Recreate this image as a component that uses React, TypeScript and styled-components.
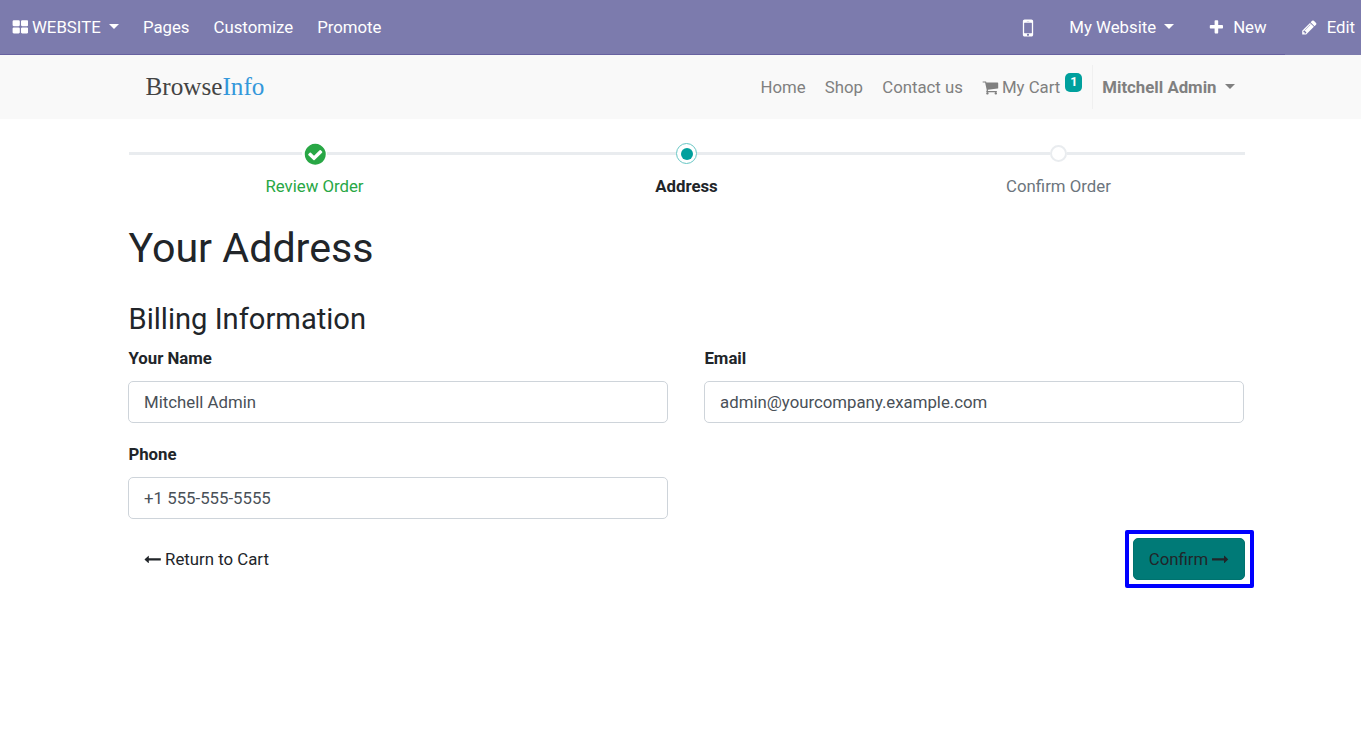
import React from "react";
import styled, { createGlobalStyle } from "styled-components";

const GlobalStyle = createGlobalStyle`
  *, *::before, *::after { box-sizing: border-box; }
  body {
    margin: 0;
    background: #fff;
    color: #212529;
    font-family: Roboto, "Liberation Sans", sans-serif;
    font-size: 16.8px;
    line-height: 25.2px;
  }
  a { color: inherit; text-decoration: none; }
`;

const icons = {
  thLarge:
    "M832 1024v384q0 52-38 90t-90 38h-512q-52 0-90-38t-38-90v-384q0-52 38-90t90-38h512q52 0 90 38t38 90zm0-768v384q0 52-38 90t-90 38h-512q-52 0-90-38t-38-90v-384q0-52 38-90t90-38h512q52 0 90 38t38 90zm896 768v384q0 52-38 90t-90 38h-512q-52 0-90-38t-38-90v-384q0-52 38-90t90-38h512q52 0 90 38t38 90zm0-768v384q0 52-38 90t-90 38h-512q-52 0-90-38t-38-90v-384q0-52 38-90t90-38h512q52 0 90 38t38 90z",
  mobile:
    "M976 1408q0-33-23.5-56.5t-56.5-23.5-56.5 23.5-23.5 56.5 23.5 56.5 56.5 23.5 56.5-23.5 23.5-56.5zm208-160v-704q0-13-9.5-22.5t-22.5-9.5h-512q-13 0-22.5 9.5t-9.5 22.5v704q0 13 9.5 22.5t22.5 9.5h512q13 0 22.5-9.5t9.5-22.5zm-192-848q0-16-16-16h-160q-16 0-16 16t16 16h160q16 0 16-16zm288-16v1024q0 52-38 90t-90 38h-512q-52 0-90-38t-38-90v-1024q0-52 38-90t90-38h512q52 0 90 38t38 90z",
  plus:
    "M1600 736v192q0 40-28 68t-68 28h-416v416q0 40-28 68t-68 28h-192q-40 0-68-28t-28-68v-416h-416q-40 0-68-28t-28-68v-192q0-40 28-68t68-28h416v-416q0-40 28-68t68-28h192q40 0 68 28t28 68v416h416q40 0 68 28t28 68z",
  pencil:
    "M491 1536l91-91-235-235-91 91v107h128v128h107zm523-928q0-22-22-22-10 0-17 7l-542 542q-7 7-7 17 0 22 22 22 10 0 17-7l542-542q7-7 7-17zm-54-192l416 416-832 832h-416v-416zm683 96q0 53-37 90l-166 166-416-416 166-165q36-38 90-38 53 0 91 38l235 234q37 39 37 91z",
  cart:
    "M704 1536q0 52-38 90t-90 38-90-38-38-90 38-90 90-38 90 38 38 90zm896 0q0 52-38 90t-90 38-90-38-38-90 38-90 90-38 90 38 38 90zm128-1088v512q0 24-16.5 42.5t-40.5 21.5l-1044 122q13 60 13 70 0 16-24 64h920q26 0 45 19t19 45-19 45-45 19h-1024q-26 0-45-19t-19-45q0-11 8-31.5t16-36 21.5-40 15.5-29.5l-177-823h-204q-26 0-45-19t-19-45 19-45 45-19h256q16 0 28.5 6.5t19.5 15.5 13 24.5 8 26 5.5 29.5 4.5 26h1201q26 0 45 19t19 45z",
  checkCircle:
    "M1412 734q0-28-18-46l-91-90q-19-19-45-19t-45 19l-408 407-226-226q-19-19-45-19t-45 19l-91 90q-18 18-18 46 0 27 18 45l362 362q19 19 45 19 27 0 46-19l543-543q18-18 18-45zm252 162q0 209-103 385.5t-279.5 279.5-385.5 103-385.5-103-279.5-279.5-103-385.5 103-385.5 279.5-279.5 385.5-103 385.5 103 279.5 279.5 103 385.5z",
  arrowLeft:
    "M1792 800v192q0 14-9 23t-23 9h-1248v224q0 21-19 29t-35-5l-384-350q-10-10-10-23 0-14 10-24l384-354q16-14 35-6 19 9 19 29v224h1248q14 0 23 9t9 23z",
  arrowRight:
    "M1728 893q0 14-10 24l-384 354q-16 14-35 6-19-9-19-29v-224h-1248q-14 0-23-9t-9-23v-192q0-14 9-23t23-9h1248v-224q0-21 19-29t35 5l384 350q10 10 10 23z",
};

const Svg = styled.svg<{ $size: number; $lift: number }>`
  display: block;
  flex: none;
  width: ${(p) => p.$size}px;
  height: ${(p) => p.$size}px;
  margin-bottom: ${(p) => p.$lift}px;
  fill: currentColor;
`;

const Icon = ({
  name,
  size = 16.8,
  lift = 0,
}: {
  name: keyof typeof icons;
  size?: number;
  lift?: number;
}) => (
  <Svg $size={size} $lift={lift} viewBox="0 0 1792 1792" aria-hidden="true">
    <path d={icons[name]} />
  </Svg>
);

const Caret = styled.span<{ $gap?: number }>`
  flex: none;
  border: 5px solid transparent;
  border-top-color: currentColor;
  border-bottom: 0;
  margin: 0 0 3px ${(p) => p.$gap ?? 8}px;
`;

const AdminBar = styled.header`
  display: flex;
  justify-content: space-between;
  height: 55px;
  background: #7c7bad;
  color: #fff;
`;

const BarGroup = styled.div<{ $grow?: boolean }>`
  display: flex;
  flex: ${(p) => (p.$grow ? 1 : "none")};
  border-bottom: 1px solid #6761a0;
`;

const BarItem = styled.a<{ $left?: number; $right?: number; $gap?: number }>`
  display: flex;
  align-items: center;
  gap: ${(p) => p.$gap ?? 0}px;
  padding: 1px ${(p) => p.$right ?? 12}px 0 ${(p) => p.$left ?? 12}px;
`;

const EditItem = styled(BarItem)`
  width: 76px;
  padding: 0 0 0 16.3px;
`;

const SiteHeader = styled.nav`
  height: 64px;
  background: #f9f9f9;
  color: #808080;
`;

const Container = styled.div`
  width: 1116px;
  margin-left: 128.5px;
`;

const HeaderInner = styled(Container)`
  display: flex;
  align-items: center;
  justify-content: space-between;
  height: 64px;
`;

const Logo = styled.a`
  padding: 0 0 1px 17px;
  font-family: "Liberation Serif", serif;
  font-size: 25.2px;
  color: #444;
  span { color: #3498db; }
`;

const SiteMenu = styled.div`
  display: flex;
  align-items: center;
  height: 44px;
  padding-right: 9.5px;
`;

const MenuLink = styled.a`
  display: flex;
  align-items: center;
  margin-right: 19.2px;
  padding-top: 1px;
`;

const CartLink = styled(MenuLink)`
  gap: 3px;
  margin-right: 10px;
`;

const Badge = styled.sup`
  align-self: flex-start;
  width: 17px;
  height: 19px;
  margin: -2px 0 0 2px;
  border-radius: 5px;
  background: #00a09d;
  color: #fff;
  font-size: 12.6px;
  font-weight: 700;
  line-height: 18px;
  text-align: center;
`;

const UserLink = styled.a`
  display: flex;
  align-items: center;
  height: 44px;
  padding: 1px 0 0 9px;
  border-left: 1px solid #f0f0f0;
  font-weight: 700;
`;

const Steps = styled.ol`
  display: grid;
  grid-template-columns: repeat(3, 1fr);
  height: 85px;
  margin: 0;
  padding: 23px 0 0;
  list-style: none;
`;

const Step = styled.li<{ $color: string; $bold?: boolean }>`
  display: flex;
  flex-direction: column;
  align-items: center;
  color: ${(p) => p.$color};
  font-weight: ${(p) => (p.$bold ? 700 : 400)};
`;

const StepTrack = styled.div<{ $gap: number }>`
  display: flex;
  align-items: center;
  gap: ${(p) => p.$gap}px;
  width: 100%;
  height: 23px;
  margin-bottom: 9px;
  &::before, &::after {
    content: "";
    flex: 1;
    height: 3px;
    background: #e9ecef;
  }
`;

const DoneDot = styled.span`
  display: flex;
  align-items: center;
  justify-content: center;
  width: 21px;
  height: 21px;
  padding: 1px 0 0 1px;
  color: #28a745;
`;

const ActiveDot = styled.span`
  display: grid;
  place-items: center;
  width: 21px;
  height: 21px;
  border: 1px solid #66c6c4;
  border-radius: 50%;
  &::before {
    content: "";
    width: 12px;
    height: 12px;
    border-radius: 50%;
    background: #00a09d;
  }
`;

const PendingDot = styled.span`
  width: 17px;
  height: 17px;
  border: 2.4px solid #e9ecef;
  border-radius: 50%;
`;

const Title = styled.h1`
  margin: 19px 0 0;
  font-size: 41.2px;
  font-weight: 400;
  line-height: 50px;
`;

const Subtitle = styled.h3`
  margin: 29px 0 9px;
  font-size: 29.15px;
  font-weight: 400;
  line-height: 35px;
`;

const Form = styled.form`
  display: grid;
  grid-template-columns: 540px 540px;
  gap: 19px 36px;
  margin-left: -0.1px;
`;

const Field = styled.label`
  display: flex;
  flex-direction: column;
  gap: 10px;
  font-weight: 700;
  line-height: 25px;
`;

const Input = styled.input`
  width: 100%;
  height: 42px;
  padding: 0 14.7px;
  border: 1px solid #ced4da;
  border-radius: 5px;
  background: #fff;
  color: #495057;
  font: inherit;
  font-weight: 400;
`;

const Actions = styled.div`
  display: flex;
  align-items: center;
  justify-content: space-between;
  margin: 11px -9.5px 0 0;
  padding-left: 15.8px;
`;

const TextLink = styled.a`
  display: flex;
  align-items: center;
  gap: 4px;
  padding-top: 1px;
`;

const Highlight = styled.div`
  padding: 4px 5px 4px 4px;
  border: 4px solid #0000ff;
  border-radius: 2px;
`;

const ConfirmButton = styled.button`
  display: flex;
  align-items: center;
  gap: 4px;
  width: 112px;
  height: 42px;
  padding: 1px 0 0 14.8px;
  border: 1px solid #00726f;
  border-radius: 5px;
  background: #007a77;
  color: #212529;
  font: inherit;
`;

const fields = [
  { label: "Your Name", value: "Mitchell Admin" },
  { label: "Email", value: "admin@yourcompany.example.com" },
  { label: "Phone", value: "+1 555-555-5555" },
];

export default function App() {
  return (
    <>
      <GlobalStyle />
      <AdminBar>
        <BarGroup $grow>
          <BarItem $left={11.6} $gap={3.6}>
            <Icon name="thLarge" lift={1} />
            WEBSITE
            <Caret $gap={4.6} />
          </BarItem>
          <BarItem>Pages</BarItem>
          <BarItem>Customize</BarItem>
          <BarItem>Promote</BarItem>
        </BarGroup>
        <BarGroup>
          <BarItem $right={12}>
            <Icon name="mobile" size={24} />
          </BarItem>
          <BarItem $left={17.6} $right={18.2}>
            My Website
            <Caret />
          </BarItem>
          <BarItem $left={16} $right={18.4} $gap={8}>
            <Icon name="plus" lift={1} />
            New
          </BarItem>
        </BarGroup>
        <EditItem $gap={8.6}>
          <Icon name="pencil" lift={1} />
          Edit
        </EditItem>
      </AdminBar>
      <SiteHeader>
        <HeaderInner>
          <Logo>
            Browse<span>Info</span>
          </Logo>
          <SiteMenu>
            <MenuLink>Home</MenuLink>
            <MenuLink>Shop</MenuLink>
            <MenuLink>Contact us</MenuLink>
            <CartLink>
              <Icon name="cart" lift={1} />
              My Cart
              <Badge>1</Badge>
            </CartLink>
            <UserLink>
              Mitchell Admin
              <Caret $gap={8.5} />
            </UserLink>
          </SiteMenu>
        </HeaderInner>
      </SiteHeader>
      <Container as="main">
        <Steps>
          <Step $color="#28a745">
            <StepTrack $gap={2}>
              <DoneDot>
                <Icon name="checkCircle" size={24.5} />
              </DoneDot>
            </StepTrack>
            Review Order
          </Step>
          <Step $color="#212529" $bold>
            <StepTrack $gap={0}>
              <ActiveDot />
            </StepTrack>
            Address
          </Step>
          <Step $color="#6c757d">
            <StepTrack $gap={0}>
              <PendingDot />
            </StepTrack>
            Confirm Order
          </Step>
        </Steps>
        <Title>Your Address</Title>
        <Subtitle>Billing Information</Subtitle>
        <Form>
          {fields.map((f) => (
            <Field key={f.label}>
              {f.label}
              <Input defaultValue={f.value} />
            </Field>
          ))}
        </Form>
        <Actions>
          <TextLink>
            <Icon name="arrowLeft" lift={1} />
            Return to Cart
          </TextLink>
          <Highlight>
            <ConfirmButton type="button">
              Confirm
              <Icon name="arrowRight" lift={1} />
            </ConfirmButton>
          </Highlight>
        </Actions>
      </Container>
    </>
  );
}
